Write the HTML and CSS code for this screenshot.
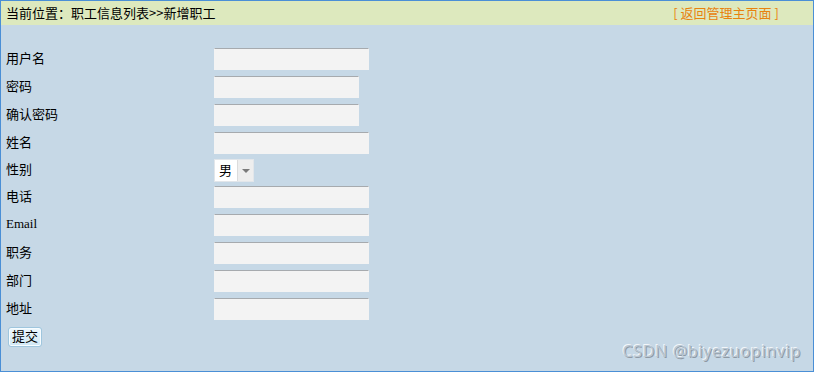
FILE: index.html
```html
<!DOCTYPE html>
<html lang="zh">
<head>
<meta charset="utf-8">
<title>新增职工</title>
<link rel="stylesheet" href="styles.css">
</head>
<body>
<div class="frame">
  <div class="topbar">
    <span class="crumb">当前位置：职工信息列表&gt;&gt;新增职工</span>
    <a class="back" href="#"><span class="br-l">[</span>返回管理主页面<span class="br-r">]</span></a>
  </div>
  <form class="form">
    <div class="row"><label class="lbl">用户名</label><input class="field" type="text"></div>
    <div class="row"><label class="lbl">密码</label><input class="field short" type="password"></div>
    <div class="row"><label class="lbl">确认密码</label><input class="field short" type="password"></div>
    <div class="row"><label class="lbl">姓名</label><input class="field" type="text"></div>
    <div class="row sel-row"><label class="lbl">性别</label>
      <div class="select"><span class="sel-val">男</span><span class="sel-arrow"></span></div>
    </div>
    <div class="row"><label class="lbl">电话</label><input class="field" type="text"></div>
    <div class="row"><label class="lbl latin">Email</label><input class="field" type="text"></div>
    <div class="row"><label class="lbl">职务</label><input class="field" type="text"></div>
    <div class="row"><label class="lbl">部门</label><input class="field" type="text"></div>
    <div class="row"><label class="lbl">地址</label><input class="field" type="text"></div>
    <div class="actions"><button class="submit" type="button">提交</button></div>
  </form>
  <div class="watermark">CSDN @biyezuopinvip</div>
</div>
</body>
</html>
```
FILE: styles.css
```css
html, body {
  margin: 0;
  padding: 0;
}
body {
  font-family: "Noto Sans CJK SC", "Noto Sans", sans-serif;
  font-size: 13px;
  color: #000;
}
.frame {
  position: relative;
  width: 814px;
  height: 372px;
  box-sizing: border-box;
  border: 1px solid #4a8fd6;
  background: #c6d8e6;
}
.topbar {
  height: 24px;
  background: #dde9be;
  display: flex;
  align-items: center;
  justify-content: space-between;
  padding: 0 34px 0 5px;
  line-height: 22px;
}
.crumb {
  color: #000;
}
.back {
  color: #e8820e;
  text-decoration: none;
}
.br-l {
  margin-right: 3px;
}
.br-r {
  margin-left: 3px;
}
.form {
  display: flex;
  flex-direction: column;
  padding: 20px 0 0 5px;
  margin: 0;
}
.row {
  display: flex;
  align-items: center;
  height: 28px;
}
.sel-row {
  height: 26px;
}
.lbl {
  width: 208px;
  line-height: 16px;
  padding-bottom: 3px;
}
.latin {
  font-family: "Liberation Serif", "Times New Roman", serif;
}
.field {
  box-sizing: border-box;
  width: 155px;
  height: 22px;
  margin: 0;
  padding: 0 2px;
  background: #f3f3f3;
  border: 1px solid #f3f3f3;
  border-top: 1px solid #a6aaae;
  outline: none;
  font: inherit;
}
.field.short {
  width: 145px;
}
.select {
  box-sizing: border-box;
  width: 40px;
  height: 23px;
  display: flex;
  align-items: stretch;
  background: #fff;
  border: 1px solid #e2e6ea;
}
.sel-val {
  flex: 1;
  padding-left: 4px;
  line-height: 20px;
}
.sel-arrow {
  width: 15px;
  position: relative;
  background: #eeeeee;
  border-left: 1px solid #dcdcdc;
}
.sel-arrow::after {
  content: "";
  position: absolute;
  left: 4px;
  top: 9px;
  border-left: 4px solid transparent;
  border-right: 4px solid transparent;
  border-top: 4px solid #7a7a7a;
}
.actions {
  padding: 3px 0 0 2px;
}
.submit {
  box-sizing: border-box;
  width: 34px;
  height: 20px;
  padding: 0 0 2px;
  font: inherit;
  font-size: 13px;
  line-height: 16px;
  color: #000;
  background: linear-gradient(#eef8fe, #cfe7f5);
  border: 1px solid #9fc6de;
  border-radius: 3px;
  box-shadow: inset 0 0 0 1px #f7fcff;
}
.watermark {
  position: absolute;
  right: 12px;
  bottom: 9px;
  font-family: "Noto Sans", "Open Sans", sans-serif;
  font-size: 16px;
  letter-spacing: 0.7px;
  color: #b9c7d3;
  text-shadow: 1px 1px 0 #8f9aa5, -1px -1px 0 #f2f6f9;
}
```
